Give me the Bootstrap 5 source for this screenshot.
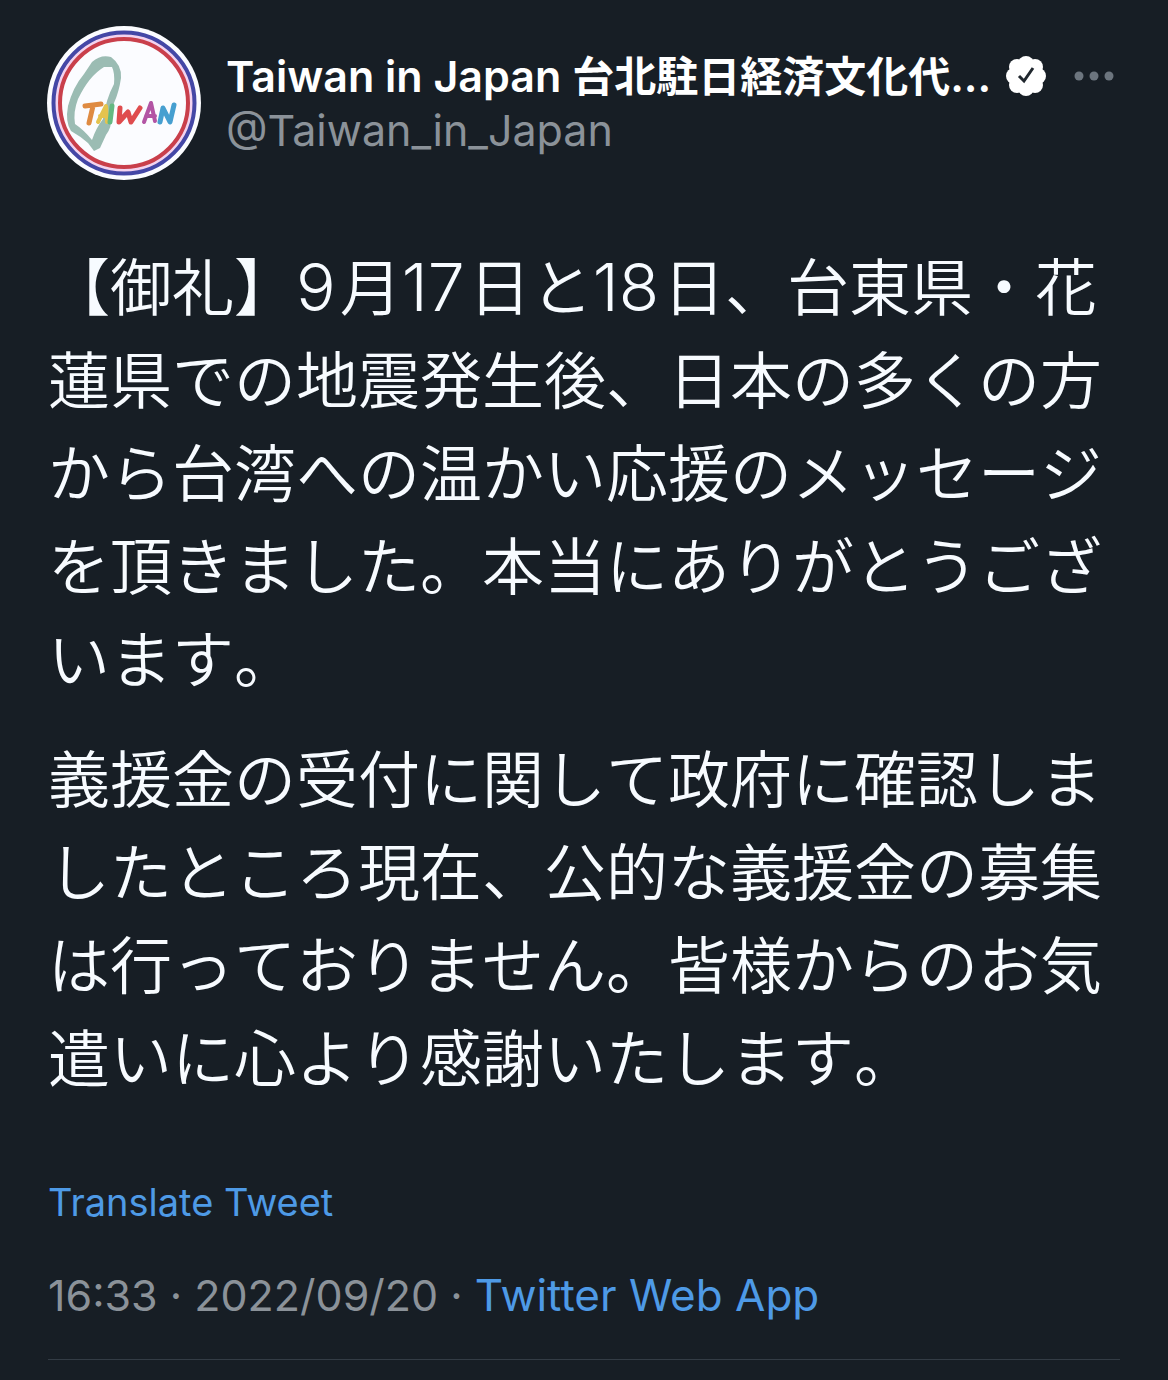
<!DOCTYPE html>
<html lang="ja">
<head>
<meta charset="utf-8">
<meta name="viewport" content="width=device-width, initial-scale=1">
<title>Taiwan in Japan</title>
<link href="https://cdn.jsdelivr.net/npm/bootstrap@5.3.0/dist/css/bootstrap.min.css" rel="stylesheet">
<style>
body { background: #171e25; color: #f7fbff; font-family: Inter, "Noto Sans CJK JP", sans-serif; }
.tweet { padding: 24px 48px 20px; }
.avatar { width: 156px; height: 156px; margin-left: -2px; }
.who { padding-top: 25px; margin-left: 24px; }
.display-name { font-size: 43px; line-height: 54px; font-weight: 600; margin: 0; color: #fff; }
.kanji-name { font-size: 42px; line-height: 1; }
.handle { font-size: 43px; line-height: 54px; color: #8b9299; }
.verified { width: 42px; height: 44px; margin-left: 14px; }
.more { width: 42px; height: 54px; margin-left: 26px; color: #6c757e; }
.message { font-size: 62px; line-height: 93px; font-weight: 350; font-kerning: none; padding-top: 62px; }
.message p { margin: 0 0 27px; }
.num { font-size: 66px; line-height: 1; font-weight: 300; padding-right: 4px; }
.sky { color: #4e9ae6; text-decoration: none; }
.translate { font-size: 38px; line-height: 48px; padding-top: 45px; }
.meta { font-size: 43px; line-height: 56px; color: #8b9299; padding-top: 41px; padding-bottom: 36px; }
.meta .sky { font-size: 44px; line-height: 1; }
.rule { border-top: 1px solid #333c45; }
</style>
</head>
<body>
<main class="container-fluid tweet">
  <article>
    <header class="d-flex align-items-start">
      <svg class="avatar flex-shrink-0" viewBox="0 0 156 156" role="img" aria-label="Taiwan">
        <circle cx="78" cy="79" r="77" fill="#fbfcff"/>
        <circle cx="78" cy="79" r="70" fill="none" stroke="#4447a6" stroke-width="5"/>
        <circle cx="78" cy="79" r="67" fill="none" stroke="#f3d3ef" stroke-width="3"/>
        <circle cx="78" cy="79" r="64" fill="none" stroke="#c93f4b" stroke-width="4"/>
        <path fill="#9bbcb3" fill-rule="evenodd" d="M46 38Q55 30 65 33Q76 41 75 54Q73 68 68 79L65 94Q66 103 60 111L54 124L48 127L42 119Q34 112 25 107Q19 98 22 82Q27 63 38 50ZM58 43Q43 52 32 75Q27 88 29 100Q38 106 46 116Q50 104 57 95Q60 75 68 60Q69 49 66 43Z"/>
        <g fill="none" stroke-width="5" stroke-linecap="round" stroke-linejoin="round">
          <path stroke="#df8b42" d="M39 82L55 80M47 82L43 99"/>
          <path stroke="#e4c34e" stroke-width="4" d="M52 98L60 82L61 98M54 92H61"/>
          <path stroke="#64b982" d="M66 82L64 98"/>
          <path stroke="#df4c4e" d="M74 84L73 98L82 88L85 98L94 84"/>
          <path stroke="#b354a4" stroke-width="4" d="M98 98L105 79L109 97M100 92H109"/>
          <path stroke="#469fd0" d="M114 98L117 84L124 98L128 81"/>
        </g>
      </svg>
      <div class="who">
        <div class="d-flex align-items-center">
          <h1 class="display-name text-nowrap">Taiwan in Japan <span class="kanji-name">台北駐日経済文化代</span>...</h1>
          <svg class="verified flex-shrink-0" viewBox="0 0 42 44" role="img" aria-label="認証済み">
            <g fill="#fff"><circle cx="21" cy="22" r="15"/><circle cx="21" cy="10" r="8"/><circle cx="30" cy="13" r="8"/><circle cx="33" cy="22" r="8"/><circle cx="30" cy="31" r="8"/><circle cx="21" cy="34" r="8"/><circle cx="12" cy="31" r="8"/><circle cx="9" cy="22" r="8"/><circle cx="12" cy="13" r="8"/></g>
            <path d="M14 22L19 27L28 14" fill="none" stroke="#20272e" stroke-width="3"/>
          </svg>
          <button type="button" class="more btn p-0 border-0 d-flex align-items-center" aria-label="その他">
            <svg width="42" height="10" viewBox="0 0 42 10" fill="currentColor" aria-hidden="true"><circle cx="6" cy="5" r="4.5"/><circle cx="21" cy="5" r="4.5"/><circle cx="36" cy="5" r="4.5"/></svg>
          </button>
        </div>
        <div class="handle">@Taiwan_in_Japan</div>
      </div>
    </header>
    <div class="message">
      <p>【御礼】<span class="num">9</span>月<span class="num">17</span>日と<span class="num">18</span>日、台東県・花<wbr>蓮県での地震発生後、日本の多くの方から台湾への温かい応援のメッセージを頂きました。本当にありがとうございます。</p>
      <p>義援金の受付に関して政府に確認しましたところ現在、公的な義援金の募集は行っておりません。皆様からのお気遣いに心より感謝いたします。</p>
    </div>
    <div class="translate"><a class="sky" href="#">Translate Tweet</a></div>
    <div class="meta"><time datetime="2022-09-20T16:33">16:33 · 2022/09/20</time> · <a class="sky" href="#">Twitter Web App</a></div>
    <div class="rule"></div>
  </article>
</main>
<script src="https://cdn.jsdelivr.net/npm/bootstrap@5.3.0/dist/js/bootstrap.bundle.min.js"></script>
</body>
</html>
